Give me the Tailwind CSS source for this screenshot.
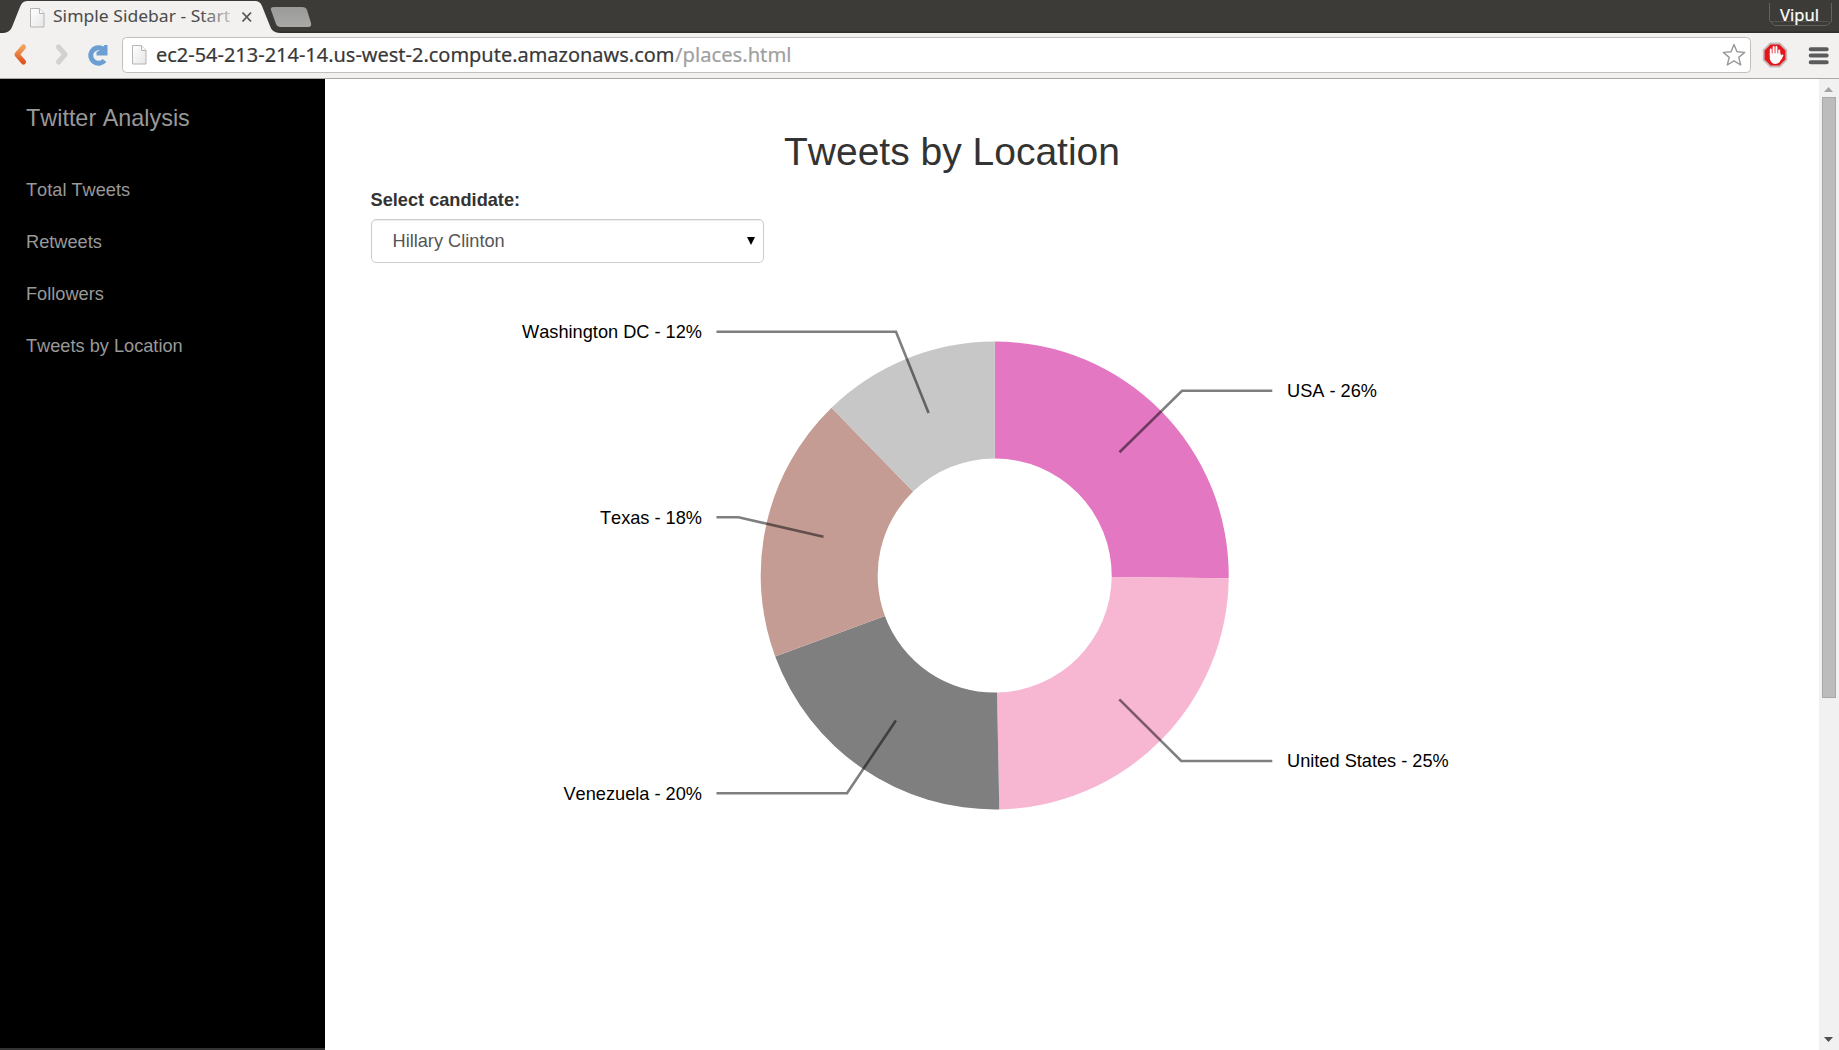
<!DOCTYPE html>
<html lang="en">
<head>
<meta charset="utf-8">
<title>Simple Sidebar - Start</title>
<script src="https://cdn.jsdelivr.net/npm/@tailwindcss/browser@4"></script>
</head>
<body class="w-[1839px] h-[1050px] overflow-hidden bg-white flex flex-col font-['Liberation_Sans',Arial,sans-serif] [font-kerning:none]">
<!-- Browser chrome: tab strip and toolbar -->
<header class="h-[79px] shrink-0">
<svg width="1839" height="79" viewBox="0 0 1839 79" class="block" font-family="'Noto Sans',sans-serif">
  <defs>
    <linearGradient id="fade" gradientUnits="userSpaceOnUse" x1="200" x2="234" y1="0" y2="0"><stop offset="0" stop-color="#4a4a4a"/><stop offset="1" stop-color="#d0d0d0"/></linearGradient>
    <linearGradient id="orange" x1="0" x2="0" y1="0" y2="1"><stop offset="0" stop-color="#efa45e"/><stop offset="1" stop-color="#df5420"/></linearGradient>
    <linearGradient id="paper" x1="0" x2="1" y1="0" y2="1"><stop offset="0" stop-color="#fff"/><stop offset="1" stop-color="#e6e6e6"/></linearGradient>
    <linearGradient id="newtab" x1="0" x2="0" y1="0" y2="1"><stop offset="0" stop-color="#9a9a98"/><stop offset="1" stop-color="#a9a9a7"/></linearGradient>
    <g id="page"><path d="M.5.5h9l4.500 5v13.500h-13.500z" fill="url(#paper)" stroke="#b5b5b5"/><path d="M9.500.5v5h4.500" fill="#f8f8f8" stroke="#b5b5b5"/></g>
  </defs>
  <rect width="1839" height="33" fill="#3c3b37"/>
  <rect y="31.500" width="1839" height="1.500" fill="#302f2c"/>
  <rect y="33" width="1839" height="45" fill="#f2f1f0"/>
  <path d="M0 33C8 33 10 31 12 27L20 7Q22 1 27 1H255Q260 1 262 6L270 26Q272 33 280 33V35H0z" fill="#f2f1f0"/>
  <path d="M274 7h28q4 0 5 3l4 13q1 4-3 4h-27q-4 0-5-3l-5-14q-1-3 3-3z" fill="url(#newtab)"/>
  <use href="#page" x="30" y="8"/>
  <text x="53" y="22" font-size="17" textLength="177" lengthAdjust="spacingAndGlyphs" fill="url(#fade)">Simple Sidebar - Start</text>
  <path d="M242.500 12.500l8.500 9M251 12.500l-8.500 9" stroke="#555" stroke-width="1.800"/>
  <path d="M23.500 47l-6.500 7.500 6.500 7.500" fill="none" stroke="url(#orange)" stroke-width="5" stroke-linecap="round" stroke-linejoin="round"/>
  <path d="M58.500 47l6.500 7.500-6.500 7.500" fill="none" stroke="#d3d1cf" stroke-width="5" stroke-linecap="round" stroke-linejoin="round"/>
  <path d="M104.500 60.500a7.800 7.800 0 1 1-2.500-12" fill="none" stroke="#6b9fd3" stroke-width="5"/>
  <path d="M107.500 45v10.500h-11v-3.500l4-2-2-4 5 .5 1-1.500z" fill="#6b9fd3"/>
  <rect x="122.500" y="37.500" width="1628" height="35" rx="4" fill="#fff" stroke="#c0bfbd"/>
  <use href="#page" x="132" y="45"/>
  <text x="156" y="61.500" font-size="20" textLength="518.500" lengthAdjust="spacingAndGlyphs" fill="#383838" stroke="#383838" stroke-width=".2">ec2-54-213-214-14.us-west-2.compute.amazonaws.com</text>
  <text x="675" y="61.500" font-size="20" textLength="116.500" lengthAdjust="spacingAndGlyphs" fill="#a0a0a0" stroke="#a0a0a0" stroke-width=".2">/places.html</text>
  <path d="M1734 44.500l3 7.300 7.700.6-5.900 5 1.900 7.600-6.700-4.200-6.700 4.200 1.900-7.600-5.900-5 7.700-.6z" fill="#fff" stroke="#999" stroke-width="1.400" stroke-linejoin="round"/>
  <path d="M1770.300 43.500h9.400l6.600 6.600v9.800l-6.600 6.600h-9.400l-6.600-6.600v-9.800z" fill="#e5151b" stroke="#c4b8b8" stroke-width="1.800"/>
  <g stroke="#fff" stroke-width="2" stroke-linecap="round" fill="none"><path d="M1770.800 55v-5.500M1773.600 54v-7M1776.400 54v-7M1779.200 56v-5.500M1780.500 59l1.800-3.500"/></g>
  <path d="M1769.800 53h10.400l1.500 4q-1.500 7-6 7-4.500 0-5.900-5z" fill="#fff"/>
  <path d="M1772.200 49v5M1775 48v6M1777.800 49v5" stroke="#e99" stroke-width=".6"/>
  <path d="M1810.700 49.300h16M1810.700 55.500h16M1810.700 62.200h16" stroke="#5b5b5b" stroke-width="4" stroke-linecap="round"/>
  <path d="M1769.500 3V20.500L1774.500 25.500H1826.500L1831.500 21.500V3" fill="none" stroke="#63625e"/>
  <path d="M1771 21.500h58" stroke="#55544f"/>
  <text x="1780" y="20.700" font-size="17" textLength="39" lengthAdjust="spacingAndGlyphs" fill="#fff" stroke="#fff" stroke-width=".2">Vipul</text>
  <rect y="78" width="1839" height="1" fill="#a8a8a8"/>
</svg>
</header>

<div class="flex flex-1 min-h-0">
  <nav class="w-[325px] shrink-0 bg-black border-b-2 border-[#333] text-[#999] text-[18.2px] leading-[52px] pl-[26px]">
    <div class="text-[23.4px] leading-[78px] mb-[7px]">Twitter Analysis</div>
    <ul>
      <li>Total Tweets</li>
      <li>Retweets</li>
      <li>Followers</li>
      <li>Tweets by Location</li>
    </ul>
  </nav>

  <main class="flex-1 min-w-0 text-[#333]">
    <div class="w-[1163px] ml-[45.500px] pt-[51px]">
      <h2 class="text-[39px] leading-[43px] text-center">Tweets by Location</h2>
      <label class="block mt-[14px] text-[18.2px] leading-[26px] font-bold">Select candidate:</label>
      <div class="mt-[6px] w-[393.500px] h-[44px] flex items-center justify-between pl-[21px] pr-[8px] rounded-[5px] border border-[#ccc] shadow-[inset_0_1px_1px_rgba(0,0,0,0.075)] text-[18.2px] text-[#555]">
        <span class="pt-[2px]">Hillary Clinton</span>
        <svg width="8" height="8" viewBox="0 0 8 8"><path d="M0 0h8L4 8z" fill="#000"/></svg>
      </div>
    </div>
    <!-- Donut chart with leader-line labels -->
    <svg class="block mt-[7px]" width="1494" height="560" viewBox="325 270 1494 560" font-size="18.200">
      <path fill="#e377c2" d="M994.700 341.500A234 234 0 0 1 1228.700 578.200L1111.700 576.900A117 117 0 0 0 994.700 458.500z"/>
      <path fill="#f7b6d2" d="M1228.700 578.200A234 234 0 0 1 999.300 809.400L997 692.500A117 117 0 0 0 1111.700 576.900z"/>
      <path fill="#7f7f7f" d="M999.300 809.400A234 234 0 0 1 775.200 656.500L884.900 616A117 117 0 0 0 997 692.500z"/>
      <path fill="#c49c94" d="M775.200 656.500A234 234 0 0 1 831.500 407.700L913.100 491.600A117 117 0 0 0 884.900 616z"/>
      <path fill="#c7c7c7" d="M831.500 407.700A234 234 0 0 1 994.700 341.500V458.500A117 117 0 0 0 913.100 491.600z"/>
      <g fill="none" stroke="#000" stroke-opacity=".5" stroke-width="2.600">
        <path d="M1119.500 452.300L1182 390.700H1272.300"/>
        <path d="M1119.300 699.300L1181.200 761H1272.300"/>
        <path d="M895.900 720.500L847 793.200H716.500"/>
        <path d="M823.500 536.800L738.500 517.300H716.500"/>
        <path d="M928.600 412.900L896 331.700H716.500"/>
      </g>
      <text x="1287" y="397">USA - 26%</text>
      <text x="1287" y="767">United States - 25%</text>
      <g text-anchor="end">
        <text x="702" y="799.700">Venezuela - 20%</text>
        <text x="702" y="523.700">Texas - 18%</text>
        <text x="702" y="337.700">Washington DC - 12%</text>
      </g>
    </svg>
  </main>

  <!-- Scrollbar -->
  <div class="w-5 shrink-0 bg-[#f1f1f1] flex flex-col items-center pt-[8px] pb-[8px]">
    <svg class="-ml-px" width="9" height="5" viewBox="0 0 9 5"><path d="M0 5h9L4.500 0z" fill="#a3a3a3"/></svg>
    <div class="mt-[5px] w-[14px] h-[601px] bg-[#bcbcbc] border border-[#a8a8a8]"></div>
    <svg class="mt-auto -ml-px" width="9" height="5" viewBox="0 0 9 5"><path d="M0 0h9L4.500 5z" fill="#505050"/></svg>
  </div>
</div>
</body>
</html>
